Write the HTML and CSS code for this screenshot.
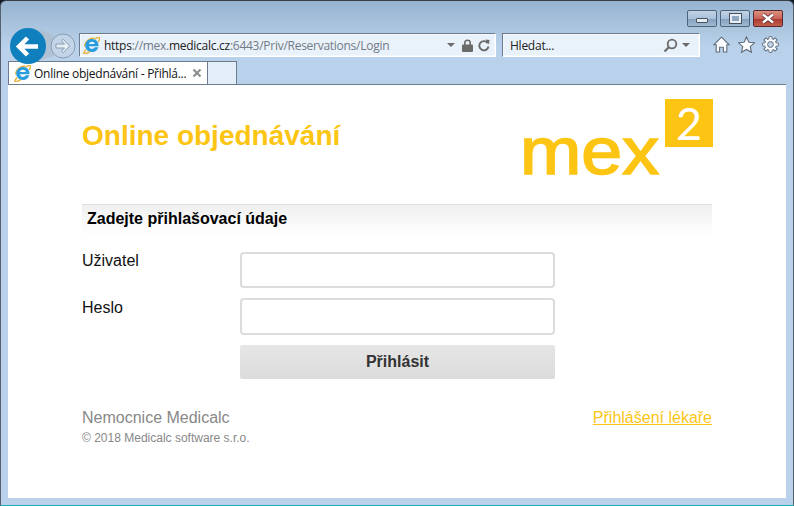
FILE: index.html
```html
<!DOCTYPE html>
<html lang="cs">
<head>
<meta charset="utf-8">
<title>Online objednávání</title>
<link rel="stylesheet" href="styles.css">
</head>
<body>
<svg class="defs" width="0" height="0" aria-hidden="true">
  <symbol id="ie" viewBox="0 0 17 17">
    <path d="M3 12.500C1.200 14.800.3 16 .9 16.500c.8.600 3.800-.6 6.100-2.100" fill="none" stroke="#e8b23a" stroke-width="1.500"/>
    <path d="M1.500 9.500C2 5 6 1.300 11 1" fill="none" stroke="#e8b23a" stroke-width="1.500"/>
    <path d="M11 2.500C13.500.9 15.600-.1 16.300.5c.6.600 0 2.500-1 4.500" fill="none" stroke="#e8b23a" stroke-width="1.400"/>
    <path d="M9 2c4.600 0 6.900 3.400 6.500 7.300H6c.3 3 4.200 3.500 5.700.9h3.700c-1.100 3.800-4.600 5.400-8 4.500C3.800 13.800 1.800 11 2.300 7.800 2.800 4.200 5.400 2 9 2zM6 6.900h5.800c-.2-3-5.400-3-5.800 0z" fill="#2a9de0"/>
  </symbol>
</svg>
<div class="window">
  <svg class="nav" width="72" height="40" viewBox="0 0 72 40" aria-hidden="true">
    <path d="M18 0 Q34 2 44 8 L44 28 L34 31 L18 36 Z" fill="#aebdcd" opacity=".8"/>
    <circle cx="53" cy="18" r="12" fill="#c2d4e8" stroke="#8a9cb0" stroke-width="1"/>
    <path d="M46 16h8.500l-3-3.200 1.700-1.500 6.500 6.700-6.500 6.700-1.700-1.500 3-3.200H46z" fill="#e6eef6" stroke="#8a9cb0" stroke-width="1"/>
    <circle cx="18" cy="18" r="18" fill="#0f7fbd"/>
    <path d="M9 18.500h19M17.500 10l-8.500 8.500 8.500 8.500" fill="none" stroke="#fff" stroke-width="4.500"/>
  </svg>
  <div class="titlebar">
    <div class="ctl"><span class="ico-min"></span></div>
    <div class="ctl"><span class="ico-max"></span></div>
    <div class="ctl ctl-close">
      <svg width="16" height="11" viewBox="0 0 16 11" aria-hidden="true"><path d="M3 1.500 13 9.500M13 1.500 3 9.500" stroke="#5a2a2a" stroke-width="4"/><path d="M3 1.500 13 9.500M13 1.500 3 9.500" stroke="#fff" stroke-width="2.500"/></svg>
    </div>
  </div>
  <div class="toolbar">
    <div class="address">
      <svg class="ie" width="17" height="17" aria-hidden="true"><use href="#ie"/></svg>
      <span class="url">https<span class="dim">://mex.</span><span class="host">medicalc.cz</span><span class="dim">:6443/Priv/Reservations/Login</span></span>
      <span class="caret"></span>
      <svg class="lock" width="11" height="13" viewBox="0 0 11 13" aria-hidden="true"><path d="M2.800 6V4a2.700 2.700 0 0 1 5.400 0v2" fill="none" stroke="#6a6a6a" stroke-width="1.600"/><rect y="5.500" width="11" height="7.500" rx="1" fill="#6a6a6a"/></svg>
      <svg class="refresh" width="12" height="13" viewBox="0 0 12 13" aria-hidden="true"><path d="M9.800 4.200A4.600 4.600 0 1 0 10.500 7.500" fill="none" stroke="#6a6a6a" stroke-width="1.900"/><path d="M7.200 0.500 11.500 1 11 5.500z" fill="#6a6a6a"/></svg>
    </div>
    <div class="search">
      <span class="search-text">Hledat...</span>
      <svg width="15" height="15" viewBox="0 0 15 15" aria-hidden="true"><circle cx="9" cy="6" r="4.300" fill="none" stroke="#6a6a6a" stroke-width="1.800"/><path d="M5.800 9.200 1.500 13.500" stroke="#6a6a6a" stroke-width="2.200"/></svg>
      <span class="caret"></span>
    </div>
    <div class="tools">
      <svg width="17" height="17" viewBox="0 0 17 17" aria-hidden="true"><path d="M8.500 1.200 16.300 8.800h-2.500V16H10.400v-4.800H6.600V16H3.200V8.800H.7z" fill="#fafcfe" stroke="#5f6d7c" stroke-width="1.100"/></svg>
      <svg width="17" height="17" viewBox="0 0 17 17" aria-hidden="true"><path d="M8.500.9l2.400 5.300 5.600.6-4.200 3.900 1.200 5.600-5-2.900-5 2.900 1.200-5.600L.5 6.800l5.600-.6z" fill="#fafcfe" stroke="#5f6d7c" stroke-width="1.100"/></svg>
      <svg width="17" height="17" viewBox="0 0 17 17" aria-hidden="true">
        <g fill="#fafcfe" stroke="#5f6d7c" stroke-width="1">
          <rect x="6.900" y=".6" width="3.200" height="15.800" rx=".5"/>
          <rect x="6.900" y=".6" width="3.200" height="15.800" rx=".5" transform="rotate(45 8.500 8.500)"/>
          <rect x="6.900" y=".6" width="3.200" height="15.800" rx=".5" transform="rotate(90 8.500 8.500)"/>
          <rect x="6.900" y=".6" width="3.200" height="15.800" rx=".5" transform="rotate(135 8.500 8.500)"/>
        </g>
        <circle cx="8.500" cy="8.500" r="5.400" fill="#fafcfe"/>
        <circle cx="8.500" cy="8.500" r="2.900" fill="#c2d4e8" stroke="#5f6d7c" stroke-width="1"/>
      </svg>
    </div>
  </div>
  <div class="tabs">
    <div class="tab">
      <svg class="ie" width="17" height="17" aria-hidden="true"><use href="#ie"/></svg>
      <span class="tab-title">Online objednávání - Přihlá...</span>
      <svg class="tab-x" width="10" height="10" viewBox="0 0 10 10" aria-hidden="true"><path d="M1.500 1.500l7 7M8.500 1.500l-7 7" stroke="#8e8e8e" stroke-width="2.200"/></svg>
    </div>
    <div class="tab-new"></div>
  </div>
  <main class="page">
    <div class="inner">
      <header class="head">
        <h1 class="title">Online objednávání</h1>
        <svg class="logo" width="192" height="78" viewBox="0 0 192 78" role="img" aria-label="mex 2">
          <rect x="144" y="0" width="48" height="48" fill="#fdc513"/>
          <text x="168" y="41" class="logo-two" text-anchor="middle">2</text>
          <text x="-1" y="75" class="logo-mex" textLength="139" lengthAdjust="spacingAndGlyphs">mex</text>
        </svg>
      </header>
      <h2 class="section">Zadejte přihlašovací údaje</h2>
      <form class="form">
        <label class="lbl" for="u">Uživatel</label>
        <input class="field" id="u" type="text">
        <label class="lbl lbl-low" for="p">Heslo</label>
        <input class="field field-tall" id="p" type="password">
        <button class="submit" type="button">Přihlásit</button>
      </form>
      <footer class="foot">
        <div>
          <div class="hospital">Nemocnice Medicalc</div>
          <div class="copy">© 2018 Medicalc software s.r.o.</div>
        </div>
        <a class="doctor" href="#">Přihlášení lékaře</a>
      </footer>
    </div>
  </main>
</div>
</body>
</html>
```
FILE: styles.css
```css
* { box-sizing: border-box; }
html, body { margin: 0; padding: 0; background: #101820; }
.defs { position: absolute; }
.window {
  position: relative;
  width: 794px;
  height: 506px;
  overflow: hidden;
  display: flex;
  flex-direction: column;
  border-radius: 6px 6px 0 0;
  border-top: 1px solid #3a3f45;
  border-left: 1px solid #55606b;
  border-right: 1px solid #55606b;
  border-bottom: 1px solid #1fa9b8;
  background: linear-gradient(#97b3cf 0, #b9d1ea 45px, #b9d1ea 100%);
  font-family: "Liberation Sans", Arial, sans-serif;
}
.nav { position: absolute; left: 9px; top: 27px; z-index: 3; }
.titlebar {
  height: 32px;
  flex: none;
  display: flex;
  justify-content: flex-end;
  gap: 3px;
  padding: 9px 10px 0 0;
}
.ctl {
  width: 30px;
  height: 17px;
  border: 1px solid #4f6478;
  border-radius: 2px;
  background: linear-gradient(#c0d2e6, #a9c0da 50%, #84a0bd 55%, #a2bad4);
  display: flex;
  align-items: center;
  justify-content: center;
}
.ctl-close {
  border-color: #5a2a2a;
  background: linear-gradient(#dc8f80, #c8665a 50%, #ab3a2e 55%, #c4604f);
}
.ico-min { width: 12px; height: 5px; background: #e7eef5; border: 1px solid #46515c; border-radius: 1px; margin-top: 4px; }
.ico-max { width: 11px; height: 9px; background: #8ea6c0; border: 2px solid #e8eef5; outline: 1px solid #46515c; }
.toolbar {
  height: 24px;
  flex: none;
  display: flex;
  padding-left: 78px;
  position: relative;
}
.address, .search {
  height: 24px;
  display: flex;
  align-items: center;
  background: #e9f1fa;
  border: 1px solid #6c7c8e;
  border-right-color: #fff;
  border-bottom-color: #fff;
  box-shadow: inset 0 0 0 1px #f4f8fc;
  font-family: "Open Sans", "Noto Sans", sans-serif;
  font-size: 12px;
  color: #222;
}
.address { width: 417px; padding: 0 5px 0 3px; }
.ie { flex: none; }
.url { margin-left: 4px; flex: 1; white-space: nowrap; overflow: hidden; letter-spacing: -.27px; }
.dim { color: #727b85; }
.host { color: #222; }
.caret { width: 0; height: 0; border: 4px solid transparent; border-top-color: #6a6a6a; border-bottom: 0; flex: none; }
.lock { margin-left: 7px; flex: none; }
.refresh { margin-left: 5px; flex: none; }
.search { width: 198px; margin-left: 6px; padding: 0 9px 0 7px; }
.search-text { flex: 1; letter-spacing: -.25px; }
.search .caret { margin-left: 4px; }
.tools { display: flex; gap: 7.500px; margin-left: 13px; align-items: center; margin-top: -2px; }
.tabs {
  flex: none;
  height: 23px;
  margin: 4px 0 0 7px;
  display: flex;
  position: relative;
}
.tab {
  width: 200px;
  height: 23px;
  background: #fff;
  border: 1px solid #6c7c8e;
  border-bottom: 0;
  display: flex;
  align-items: center;
  padding-left: 5px;
  font-family: "Open Sans", "Noto Sans", sans-serif;
  font-size: 12px;
  color: #111;
  z-index: 1;
}
.tab-title { margin-left: 3px; white-space: nowrap; letter-spacing: -.27px; flex: 1; }
.tab-x { margin-right: 5px; flex: none; }
.tab-new {
  width: 29px;
  height: 23px;
  background: #e4eef9;
  border: 1px solid #6c7c8e;
  border-left: 0;
  border-bottom: 0;
}
.page {
  flex: none;
  height: 414px;
  margin: 0 7px;
  background: #fff;
  border-top: 1px solid #6c7c8e;
}
.inner { width: 630px; margin-left: 74px; }
.head {
  height: 119px;
  display: flex;
  justify-content: space-between;
  align-items: flex-start;
}
.title {
  margin: 35px 0 0;
  font-size: 28px;
  line-height: 32px;
  font-weight: bold;
  color: #fdc513;
}
.logo { margin: 14px -1px 0 0; overflow: visible; }
.logo-two { font-family: "Lato", "Liberation Sans", sans-serif; font-weight: 400; font-size: 45px; fill: #fff; }
.logo-mex { font-family: "Liberation Sans", Arial, sans-serif; font-size: 66px; fill: #fdc513; stroke: #fdc513; stroke-width: 1.600px; }
.section {
  margin: 0;
  height: 31px;
  padding: 4px 0 0 5px;
  border-top: 1px solid #dfdfdf;
  background: linear-gradient(#f0f0f0, #fff);
  font-size: 16px;
  line-height: 20px;
  font-weight: bold;
  color: #000;
}
.form {
  display: grid;
  grid-template-columns: 158px 315px;
  column-gap: 0;
  row-gap: 10px;
  margin-top: 17px;
}
.lbl { font-size: 16px; line-height: 18px; color: #111; }
.lbl-low { padding-top: 1px; }
.field {
  height: 36px;
  width: 315px;
  border: 2px solid #dcdcdc;
  border-radius: 4px;
  background: #fff;
  outline: none;
}
.field-tall { height: 37px; }
.submit {
  grid-column: 2;
  height: 34px;
  border: 0;
  border-radius: 2px;
  background: linear-gradient(#e6e6e6, #dcdcdc);
  font-family: inherit;
  font-size: 16px;
  font-weight: bold;
  color: #333;
  padding: 0;
}
.foot {
  display: flex;
  justify-content: space-between;
  align-items: flex-start;
  margin-top: 29px;
}
.hospital { font-size: 16px; line-height: 20px; color: #888; }
.copy { font-size: 12px; line-height: 14px; margin-top: 3px; color: #888; }
.doctor { font-size: 16px; line-height: 20px; color: #fdc513; text-decoration: underline; }
```
